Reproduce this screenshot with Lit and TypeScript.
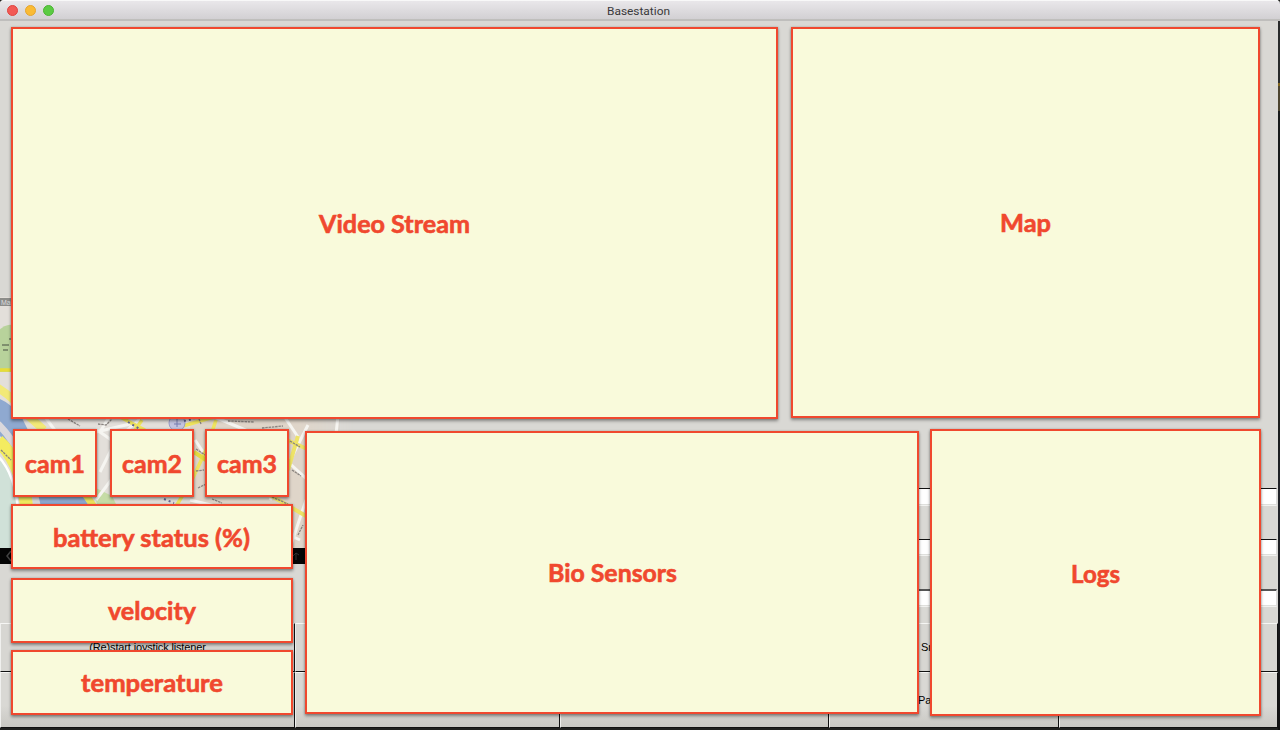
import { LitElement, html, css, svg } from "lit";
import { customElement, property } from "lit/decorators.js";

/** A labelled region of the station layout. */
@customElement("region-box")
class RegionBox extends LitElement {
  @property() label = "";
  @property({ type: Number }) fit = 100;

  static styles = css`
    :host {
      display: flex;
      align-items: center;
      justify-content: center;
      box-sizing: border-box;
      border: 2px solid #f0482e;
      background: #f9fadb;
      box-shadow: 0 2px 3px rgba(0, 0, 0, 0.38), 0 0 2px rgba(0, 0, 0, 0.2);
    }
    .label {
      display: block;
      overflow: visible;
      font: 700 24.500px Lato, "Open Sans", sans-serif;
      fill: #f0482e;
      stroke: #f0482e;
      stroke-width: 0.6px;
    }
  `;

  render() {
    return html`<svg class="label" width=${this.fit} height="30">
      <text x="0" y="24.500" textLength=${this.fit} lengthAdjust="spacingAndGlyphs">${this.label}</text>
    </svg>`;
  }
}

/** Street map with its black control bar. */
@customElement("street-map")
class StreetMap extends LitElement {
  static styles = css`
    :host,
    .map {
      display: block;
    }
    .map text {
      font: 7px "Liberation Sans", sans-serif;
    }
    .tiles {
      filter: blur(0.6px);
    }
  `;

  render() {
    const streets = [
      "M40 410 L62 440 L130 424", "M112 412 L100 432 L120 446", "M100 472 L116 440 L150 410",
      "M96 500 L130 455", "M270 500 L308 425", "M286 560 L306 500", "M280 410 L300 440",
      "M339 405 L336 435", "M190 500 L240 512 L300 540", "M286 460 L310 482",
      "M210 415 L250 432", "M195 440 L210 462",
    ];
    const ink = [
      "M68 419 L80 426", "M98 424 L106 425 L112 419", "M228 421 L254 422", "M290 441 L300 447",
      "M196 449 L205 455", "M196 471 L204 470", "M272 497 L288 504", "M298 535 L303 525",
      "M199 419 L201 424", "M262 428 L283 426", "M212 499 L222 503", "M1 450 L11 460",
      "M292 470 L301 476", "M198 488 L206 484",
    ];
    return html`<svg class="map" width="355" height="267" viewBox="0 297 355 267">
      <defs>
        <linearGradient id="edge" x1="0" x2="1">
          <stop offset="0.84" stop-color="#fff" />
          <stop offset="1" stop-color="#000" />
        </linearGradient>
        <mask id="fade"><rect y="297" width="355" height="267" fill="url(#edge)" /></mask>
        <clipPath id="area"><path d="M0 297 H355 V432 H305 V564 H0 Z" /></clipPath>
      </defs>
      <g clip-path="url(#area)">
        <g class="tiles">
          <g mask="url(#fade)">
            <rect x="-2" y="297" width="357" height="267" fill="#e3dfda" />
            <path d="M190 410 H340 V548 H190 Z" fill="#dfd5c9" />
          </g>
          <path d="M-2 331 Q8 322 14 326 V372 H-2 Z" fill="#b8d29b" />
          <path d="M2 345 H9 M3 350 H8 M9 339 H11" stroke="#6c7b60" stroke-width="1.3" />
          <path d="M-2 370 H14" stroke="#e8dc38" stroke-width="3.5" />
          <path d="M-2 388 Q14 398 24 412 L44 430" fill="none" stroke="#f2e978" stroke-width="8" />
          <path d="M-2 398 Q12 404 22 418 L35 444 L84 498 L92 510 H38 L16 452 L-2 434 Z" fill="#8fa9d0" />
          <path d="M-2 424 Q26 452 37 505" fill="none" stroke="#dad8dc" stroke-width="7" />
          <path d="M-2 441 Q22 462 27 510" fill="none" stroke="#f4ec60" stroke-width="13" />
          <path d="M-2 458 Q16 474 19 510 L24 548 H-2 Z" fill="#d0e1d8" />
          <path d="M-2 456 Q15 474 18 510" fill="none" stroke="#fff" stroke-width="2.5" />
          <path d="M84 492 L96 510" stroke="#efe45c" stroke-width="7" />
          <path d="M92 486 L112 496 L118 508 H98 Z" fill="#c6dca6" />
          ${streets.map((d) => svg`<path d=${d} fill="none" stroke="#f6f5f1" stroke-width="3" />`)}
          <path d="M120 417 L145 430 M183 426 L217 416 M216 420 L206 450 L192 480 L175 508 M128 440 L142 420"
            fill="none" stroke="#efe45e" stroke-width="3.5" />
          <path d="M268 494 L306 516 M287 440 L307 449 M288 470 L298 436" stroke="#eee367" stroke-width="4" fill="none" />
          <path d="M194 452 L206 460" stroke="#e4db40" stroke-width="4" />
          <circle cx="177" cy="423" r="8" fill="#c3c4df" stroke="#9a9dc8" />
          <path d="M174 424 H181 M177 419 V427" stroke="#777caf" />
          ${ink.map((d) => svg`<path d=${d} fill="none" stroke="#8a8480" stroke-width="1.3" stroke-dasharray="2.5 0.8" />`)}
          <path d="M128 422 L140 429 M164 499 L174 503 M184 421 L194 419" stroke="#626596" stroke-width="2" stroke-dasharray="2 3" />
        </g>
        <rect y="298" width="20" height="8" fill="#8d8d8a" />
        <text x="1" y="304.500" fill="#ddd">Map</text>
        <rect y="548" width="306" height="16" fill="#050505" />
        <path d="M11 551 L7 556 L11 561" fill="none" stroke="#444" stroke-width="1.5" />
        <path d="M296 560 V553 L293 556 M296 553 L299 555" fill="none" stroke="#333" />
      </g>
    </svg>`;
  }
}

@customElement("app-root")
class AppRoot extends LitElement {
  static styles = css`
    :host {
      display: block;
      position: relative;
      box-sizing: border-box;
      width: 1280px;
      height: 730px;
      overflow: hidden;
      background: #20211f;
      font-family: "Liberation Sans", Arial, sans-serif;
    }
    .frame {
      display: flex;
      flex-direction: column;
      width: 1278px;
      height: 728px;
      background: #d9d8d4;
      border-radius: 4px 0 3px 3px;
    }
    .titlebar {
      display: flex;
      align-items: center;
      box-sizing: border-box;
      width: 1280px;
      height: 21px;
      flex: none;
      padding: 1px 0 0 7px;
      gap: 6.500px;
      border-top: 1px solid #f8f8f8;
      border-bottom: 2px solid #bfbebc;
      border-radius: 4px 4px 0 0;
      background: linear-gradient(#e9e7ea, #d2d0d3);
    }
    .light {
      box-sizing: border-box;
      width: 11.300px;
      height: 11.300px;
      border-radius: 50%;
      border: 1px solid #e0443f;
      background: #f25a55;
    }
    .light.min { border-color: #e5a52f; background: #fabb35; }
    .light.max { border-color: #4bb432; background: #5bcb43; }
    .title { margin-left: 547px; overflow: visible; font: 11.800px Roboto, sans-serif; fill: #3a393b; }
    .upper { display: flex; height: 602px; flex: none; }
    street-map { margin-top: 276px; height: 267px; }
    .fields {
      display: flex;
      flex-direction: column;
      gap: 33px;
      flex: 1;
      padding-top: 467px;
      margin-right: 1px;
    }
    .field {
      box-sizing: border-box;
      height: 17.700px;
      background: #fff;
      border-top: 1px solid #111;
      border-right: 1px solid #ddd;
      border-bottom: 1px solid #f2f2f0;
      box-shadow: inset 0 -1px #dfdfdc;
    }
    .field:last-child { border-top: 2px solid #555; }
    .buttons {
      display: grid;
      grid-template-columns: 295px 265px 269px 230px 219px;
      grid-template-rows: 49px 56px;
    }
    .button {
      display: flex;
      align-items: center;
      justify-content: center;
      box-sizing: border-box;
      border-top: 1px solid #f6f6f4;
      border-left: 1px solid #f0f0ee;
      border-right: 1px solid #111;
      border-bottom: 1px solid #111;
      padding-bottom: 2px;
      font-size: 11px;
      color: #000;
      background: #d7d6d2;
    }
    .button.low { padding-bottom: 0; background: linear-gradient(#d9d8d4 60%, #c9c8c3); }
    .button.joystick { letter-spacing: -0.15px; }
    .button.start { justify-content: flex-start; }
    .snap { padding-left: 91px; }
    .pan { padding-left: 88px; }
    .edge {
      position: absolute;
      right: 0;
      top: 21px;
      width: 2px;
      height: 709px;
      background: linear-gradient(#292b2b 0 62px, #80651e 62px 65px, #4d4530 65px 90px, #191b1b 90px 400px, #22242a 470px, #111);
    }
    .overlay {
      position: absolute;
      inset: 0;
      display: flex;
      flex-direction: column;
      padding: 26.500px 0 0 10.500px;
      box-sizing: border-box;
    }
    .row { display: flex; align-items: flex-start; }
    .top { height: 402.500px; gap: 12.400px; }
    .video { width: 767.900px; height: 392.500px; }
    .mapbox { width: 469.500px; height: 391.800px; }
    .status { display: flex; flex-direction: column; width: 282px; }
    .cams { margin: 0 0 7px 2.500px; }
    .cam { width: 84px; height: 68.300px; }
    .cam2 { margin-left: 13px; }
    .cam3 { margin-left: 11px; }
    .bar { height: 65.200px; margin-bottom: 8.300px; }
    .bar.last { margin-top: -1.500px; }
    .bio { width: 614px; height: 283.500px; margin: 1.600px 11px 0 12.500px; }
    .logs { width: 331.300px; height: 287px; }
  `;

  render() {
    return html`
      <div class="frame">
        <div class="titlebar">
          <span class="light"></span><span class="light min"></span><span class="light max"></span>
          <svg class="title" width="63" height="16">
            <text x="0" y="12" textLength="63" lengthAdjust="spacingAndGlyphs">Basestation</text>
          </svg>
        </div>
        <div class="upper">
          <street-map></street-map>
          <div class="fields">
            <div class="field"></div><div class="field"></div><div class="field"></div>
          </div>
        </div>
        <div class="buttons">
          <div class="button joystick">(Re)start joystick listener</div>
          <div class="button"></div>
          <div class="button"></div>
          <div class="button start snap">Sn</div>
          <div class="button"></div>
          <div class="button low"></div>
          <div class="button low"></div>
          <div class="button low"></div>
          <div class="button low start pan">Pa</div>
          <div class="button low"></div>
        </div>
      </div>
      <div class="edge"></div>
      <div class="overlay">
        <div class="row top">
          <region-box class="video" label="Video Stream" fit="151"></region-box>
          <region-box class="mapbox" label="Map" fit="51"></region-box>
        </div>
        <div class="row">
          <div class="status">
            <div class="row cams">
              <region-box class="cam" label="cam1" fit="60"></region-box>
              <region-box class="cam cam2" label="cam2" fit="60"></region-box>
              <region-box class="cam cam3" label="cam3" fit="60"></region-box>
            </div>
            <region-box class="bar" label="battery status (%)" fit="197"></region-box>
            <region-box class="bar" label="velocity" fit="88"></region-box>
            <region-box class="bar last" label="temperature" fit="142"></region-box>
          </div>
          <region-box class="bio" label="Bio Sensors" fit="129"></region-box>
          <region-box class="logs" label="Logs" fit="49"></region-box>
        </div>
      </div>
    `;
  }
}
